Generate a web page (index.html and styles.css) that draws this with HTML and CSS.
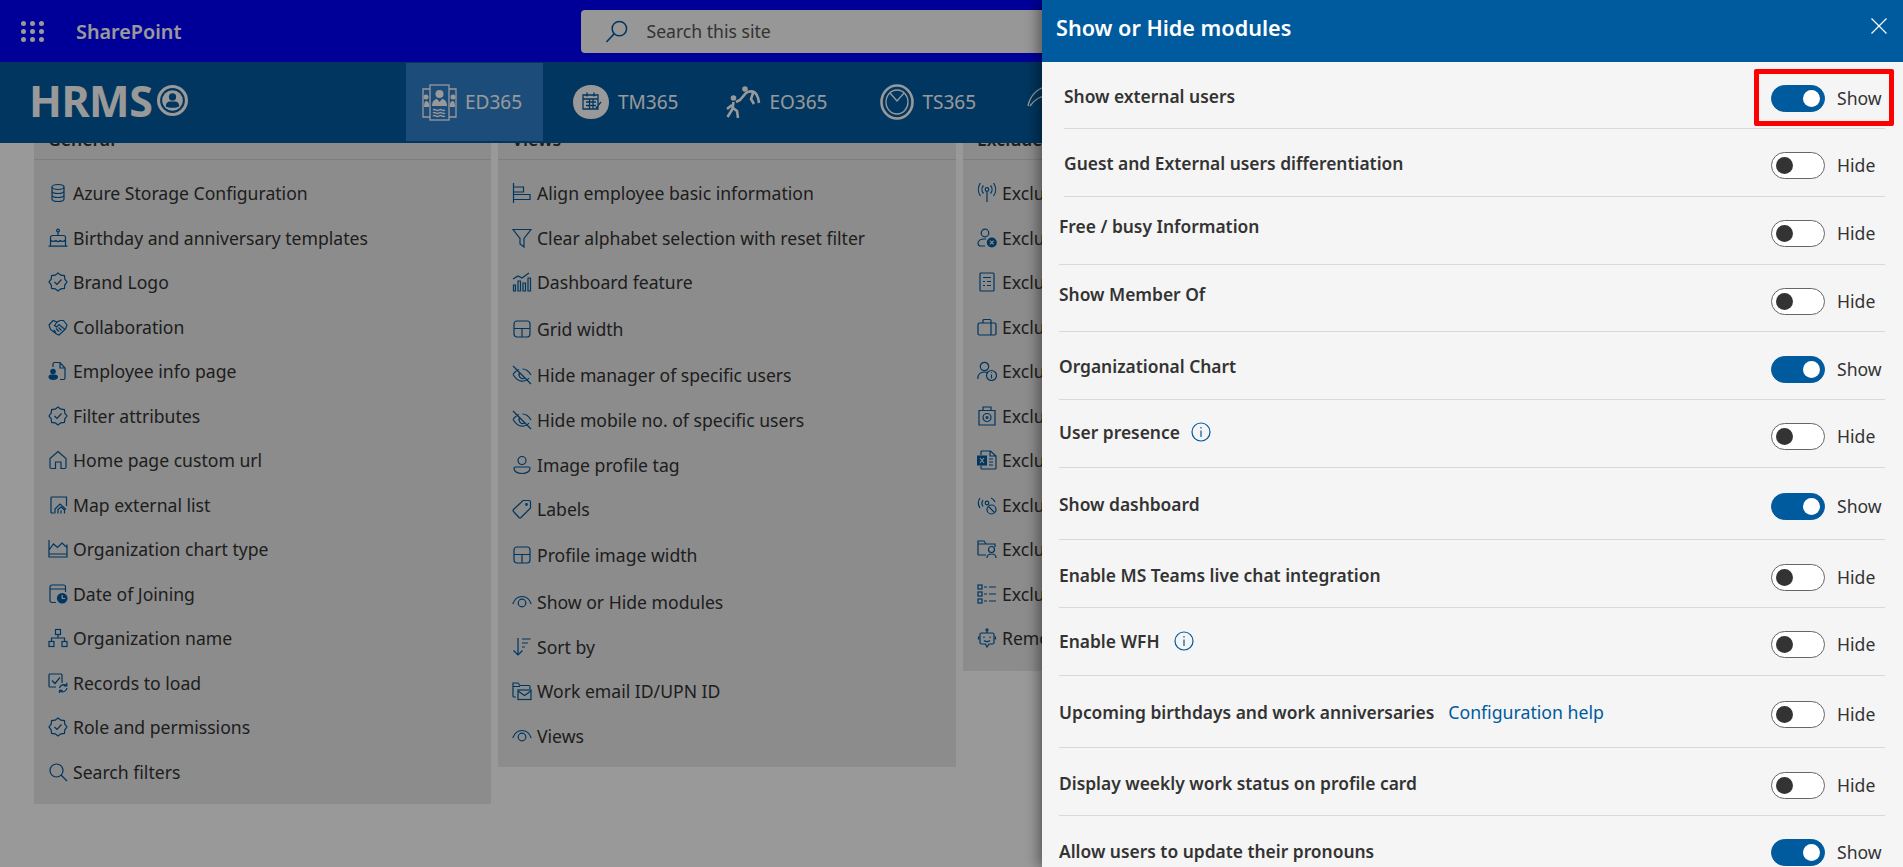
FILE: index.html
```html
<!DOCTYPE html>
<html>
  <head>
    <title>Show or Hide modules</title>
    <link rel="stylesheet" href="styles.css">
  </head>
  <body>
    <svg class="sprite" xmlns="http://www.w3.org/2000/svg">
      <symbol id="i-db" viewBox="0 0 20 20"><ellipse cx="10" cy="4" rx="6" ry="2.5"/><path d="M4 4v12c0 1.4 2.7 2.5 6 2.5s6-1.1 6-2.5V4M4 8c0 1.4 2.7 2.5 6 2.5s6-1.1 6-2.5M4 12c0 1.4 2.7 2.5 6 2.5s6-1.1 6-2.5"/></symbol>
      <symbol id="i-cake" viewBox="0 0 20 20"><circle cx="10" cy="2.5" r="1.4"/><path d="M10 4v3M2.500 18V9.500a2 2 0 0 1 2-2h11a2 2 0 0 1 2 2V18M.5 18.200h19M2.500 12c2 2 3.500 2 5.500 .5 1.300 1.500 2.700 1.500 4 0 2 1.500 3.500 1.500 5.500-.5"/></symbol>
      <symbol id="i-badge" viewBox="0 0 20 20"><polygon points="19,10 16.84,12.83 16.4,16.4 12.83,16.84 10,19 7.17,16.84 3.6,16.4 3.16,12.83 1,10 3.16,7.17 3.6,3.6 7.17,3.16 10,1 12.83,3.16 16.4,3.6 16.84,7.17"/><path d="M6.500 10l2.500 2.500 4.500-5"/></symbol>
      <symbol id="i-shake" viewBox="0 0 20 20"><path d="M1 8l4-4.500 4 1.500 3-1.500h3.500L19 8l-1.500 4-6.500 6-2.500-1L2.500 12.500z"/><path d="M9 5L6.500 8.500 8.500 10 11 7.500l6 5M5.500 13l2.500 2.500M8 11.500l3 3M10.500 10.500l3 3"/></symbol>
      <symbol id="i-docperson" viewBox="0 0 20 20"><path d="M5 6V3a1.500 1.500 0 0 1 1.500-1.500H12L17 7v10a1.500 1.500 0 0 1-1.500 1.500H12M12 1.500V7h5"/><circle class="fill" cx="5" cy="10.500" r="2.800"/><path class="fill" d="M.5 16c0-1.500 1-2.500 2.500-2.500h4c1.500 0 3 1 3 2.500 0 2-2 3-4.800 3S.5 18 .5 16z"/></symbol>
      <symbol id="i-home" viewBox="0 0 20 20"><path d="M10 1.500l8 7V17a1.500 1.500 0 0 1-1.500 1.500H13V12H7.500v6.500h-4A1.500 1.500 0 0 1 2 17V8.500z"/></symbol>
      <symbol id="i-mapext" viewBox="0 0 20 20"><path d="M3 18V3a1 1 0 0 1 1-1h14.500v9M6 18H3"/><path d="M7 18.500v-4.500l5-5 6 5.500M10 18.500v-4l3-2.500 3.500 3v3.500M13 18.500v-3"/></symbol>
      <symbol id="i-chart" viewBox="0 0 20 20"><path d="M1 1v17h18V5.500M1 11l4.500-6 4 3.500L14 4l5 4.500M1 15h18"/></symbol>
      <symbol id="i-calclock" viewBox="0 0 20 20"><path d="M8 18.500H4a2 2 0 0 1-2-2V3a2 2 0 0 1 2-2h11.500a2 2 0 0 1 2 2v5M2 5h15.500"/><circle class="fill" cx="14.200" cy="14.200" r="5.300"/><path class="cut" d="M14.200 11v3.500h3"/></symbol>
      <symbol id="i-org" viewBox="0 0 20 20"><rect x="7.500" y="1.500" width="5" height="5"/><rect x="1" y="13.500" width="5" height="5"/><rect x="14" y="13.500" width="5" height="5"/><path d="M10 6.500V10M3.500 13.500V10h13v3.500"/></symbol>
      <symbol id="i-sync" viewBox="0 0 20 20"><path d="M8 14H2a1 1 0 0 1-1-1V2a1 1 0 0 1 1-1h11a1 1 0 0 1 1 1v8M4 7.500l3 3 5-6"/><path d="M11.500 15a4.500 4.500 0 0 1 7-2.500M19 15a4.500 4.500 0 0 1-7 3M18.800 9.800v3h-3M11.500 20v-2.600h3"/></symbol>
      <symbol id="i-search" viewBox="0 0 20 20"><circle cx="8.500" cy="8.500" r="6.500"/><path d="M13 13l6 6"/></symbol>
      <symbol id="i-align" viewBox="0 0 20 20"><path d="M1.500 0v20M1.500 4h10v5h-10M1.500 11.500h16.500v5H1.500"/></symbol>
      <symbol id="i-funnel" viewBox="0 0 20 20"><path d="M1 1.500h18l-7 9v8.500l-4-3v-5.500z"/></symbol>
      <symbol id="i-dash" viewBox="0 0 20 20"><path d="M1 7l5-3 4 2 7-5M1.500 13h2v6h-2zM6 9h2.500v10H6zM11 11h2.500v8H11zM16 6h2.500v13H16z"/></symbol>
      <symbol id="i-layout" viewBox="0 0 20 20"><rect x="2" y="2" width="16" height="16" rx="3"/><path d="M2 9.500h16M10 9.500V18"/></symbol>
      <symbol id="i-eyeoff" viewBox="0 0 20 20"><path d="M1 1l18 18M1 9.500C3 6.500 5 5 7 4.500M10.500 4C14 4 17 6.500 19 10M17 13c-1.500 2-4 3.200-7 3.200C6.500 16.200 3.500 13.500 1 9.500M8 7.500a3.600 3.600 0 0 0 4.500 5.500"/></symbol>
      <symbol id="i-person" viewBox="0 0 20 20"><circle cx="10" cy="5.500" r="4"/><path d="M3.500 12h13A1.500 1.500 0 0 1 18 13.500c0 3-3.500 5-8 5s-8-2-8-5A1.500 1.500 0 0 1 3.500 12z"/></symbol>
      <symbol id="i-tag" viewBox="0 0 20 20"><path d="M11 1.500h6a1.500 1.500 0 0 1 1.500 1.500v6L9 18.500a1.500 1.500 0 0 1-2 0L1.500 12.500a1.500 1.500 0 0 1 0-2z"/><circle cx="14.500" cy="5.500" r=".8"/></symbol>
      <symbol id="i-eye" viewBox="0 0 20 20"><path d="M.8 12C2.500 7 6 4.500 10 4.500S17.500 7 19.200 12"/><circle cx="10" cy="11" r="3.800"/></symbol>
      <symbol id="i-sort" viewBox="0 0 20 20"><path d="M6 1v17M1.500 13.500L6 18l4.500-4.500M10 2h8.500M10 6h6M10 10h3"/></symbol>
      <symbol id="i-foldermail" viewBox="0 0 20 20"><path d="M4 16H2a1 1 0 0 1-1-1V2h5l2 2.500h9a1 1 0 0 1 1 1V8M1 5.500h7"/><rect x="6" y="9" width="13" height="9.500"/><path d="M6 10l6.500 4.500L19 10"/></symbol>
      <symbol id="i-antenna" viewBox="0 0 20 20"><circle cx="10" cy="6.500" r="1.800"/><path d="M10 8.500V19M6.500 2.500a6 6 0 0 0 0 8M13.500 2.500a6 6 0 0 1 0 8M3.500 0a11 11 0 0 0 0 13M16.500 0a11 11 0 0 1 0 13"/></symbol>
      <symbol id="i-personx" viewBox="0 0 20 20"><circle cx="8" cy="5" r="3.800"/><path d="M8 18H3.500A2.500 2.500 0 0 1 1 15.500C1 13 3.500 11 7 11h2"/><circle class="fill" cx="14.800" cy="14.500" r="5"/><path class="cut" d="M13 12.700l3.600 3.600M16.600 12.700L13 16.300"/></symbol>
      <symbol id="i-listdoc" viewBox="0 0 20 20"><rect x="3" y="1" width="14" height="18" rx="1"/><path d="M6 5.500h8M6 9.500h2M10 9.500h4M6 13.500h2M10 13.500h4"/></symbol>
      <symbol id="i-case" viewBox="0 0 20 20"><rect x="1" y="6" width="18" height="12" rx="1.500"/><path d="M6 6V3.500a1 1 0 0 1 1-1h6a1 1 0 0 1 1 1V18"/></symbol>
      <symbol id="i-personinfo" viewBox="0 0 20 20"><circle cx="7.500" cy="5.500" r="4.200"/><path d="M.8 18c0-4 2-7 6.700-7 1 0 1.500 0 2.500 .5"/><circle cx="14.500" cy="14.500" r="5"/><path d="M14.500 13.500v4M14.500 11.300v.8"/></symbol>
      <symbol id="i-safe" viewBox="0 0 20 20"><path d="M2 4.500h16V19H2zM6 4.500V1h8v3.500"/><circle cx="10" cy="11.500" r="4"/><circle cx="10" cy="11.500" r="1"/></symbol>
      <symbol id="i-excel" viewBox="0 0 20 20"><path d="M4 5V2a1 1 0 0 1 1-1h8.500L19 6v12a1 1 0 0 1-1 1H5a1 1 0 0 1-1-1v-2M13 1v5h6M12 9h4M12 12h4M12 15h4"/><rect class="fill" x="0" y="5.500" width="10" height="10"/><path class="cut" d="M3 8l4 5M7 8l-4 5"/></symbol>
      <symbol id="i-noantenna" viewBox="0 0 20 20"><path d="M3 3a9 9 0 0 0 0 10M6 5a6 6 0 0 0 0 6.500M14 3a7 7 0 0 1 4 4"/><circle cx="10" cy="8" r="1.800"/><circle cx="14.500" cy="14.500" r="4.500"/><path d="M11.500 11.500l6 6"/></symbol>
      <symbol id="i-folderperson" viewBox="0 0 20 20"><path d="M9 16H2a1 1 0 0 1-1-1V2h6l2 3h9v3M1 5h8"/><circle cx="14.500" cy="10.500" r="3"/><path d="M10 19c0-2.500 2-4 4.500-4s4.500 1.500 4.500 4"/></symbol>
      <symbol id="i-checklist" viewBox="0 0 20 20"><rect x="1" y="1" width="4" height="4"/><rect x="1" y="8" width="4" height="4"/><rect x="1" y="15" width="4" height="4"/><path d="M7 3h3M12 3h7M7 10h3M12 10h7M7 17h3M12 17h7"/></symbol>
      <symbol id="i-bot" viewBox="0 0 20 20"><circle cx="10" cy="1.800" r="1"/><path d="M10 3v2M4.500 5h11A1.500 1.500 0 0 1 17 6.500v8A1.500 1.500 0 0 1 15.500 16H12l-2 3-1.500-3H4.500A1.500 1.500 0 0 1 3 14.500v-8A1.500 1.500 0 0 1 4.500 5zM1.500 8.500v3M18.500 8.500v3M7 8.500v1.500M13 8.500v1.500M7 12.500c2 1.500 4 1.500 6 0"/></symbol>
    </svg>

    <div class="app">
      <div class="topbar">
        <div class="waffle">
          <i></i><i></i><i></i><i></i><i></i><i></i><i></i><i></i><i></i>
        </div>
        <span class="brand">SharePoint</span>
        <div class="searchbox">
          <svg class="search-ico" viewBox="0 0 24 24"><circle cx="15" cy="9" r="7.500"/><path d="M9.500 14.500L1.500 23"/></svg>
          <span>Search this site</span>
        </div>
      </div>

      <div class="nav">
        <div class="logo">
          <span class="logo-text">HRMS</span>
          <svg class="logo-mark" viewBox="0 0 30 30">
            <circle class="ring" cx="15" cy="15" r="13.500"/>
            <circle class="disc" cx="15" cy="15" r="10"/>
            <circle class="dark" cx="15" cy="11.500" r="3.500"/>
            <path class="dark" d="M8.500 20.500c0-3 2-4.500 4-4.500h5c2 0 4 1.500 4 4.500 0 .7-3 1.500-6.500 1.500s-6.500-.8-6.500-1.500z"/>
          </svg>
        </div>
        <div class="tabs">
          <div class="tab tab-active">
            <svg class="tab-ico" viewBox="0 0 35 37">
              <path d="M8 5H1v28h7M27 5h7v28h-7"/>
              <rect x="8" y="1" width="19" height="35"/>
              <circle class="solid" cx="17.500" cy="10" r="4"/>
              <path class="solid" d="M10 22c0-5 3-7 5-7l2.500 3 2.500-3c2 0 5 2 5 7z"/>
              <path d="M11 26q1.500-1 3 0t3 0 3 0 3 0M11 29q1.500-1 3 0t3 0 3 0 3 0M11 32q1.500-1 3 0t3 0 3 0 3 0"/>
              <circle class="solid" cx="4" cy="13" r="2.500"/><circle class="solid" cx="31" cy="13" r="2.500"/>
              <path class="solid" d="M2 23c0-4 1-6 2-6s3 1 3 3v3zM33 23c0-4-1-6-2-6s-3 1-3 3v3z"/>
            </svg>
            <span>ED365</span>
          </div>
          <div class="tab tab-tm">
            <svg class="tab-ico" viewBox="0 0 38 36">
              <path class="solid" d="M19 1c10 0 18 7 18 17s-7 17-18 17C8 35 1 28 1 18S9 1 19 1z"/>
              <path class="navy" d="M11 11h15v14H11zM11 15h15M15 8.500v4M22 8.500v4M14 18h10M14 21.500h10M17.500 15v10M21 15v10M24 24l5-6"/>
            </svg>
            <span>TM365</span>
          </div>
          <div class="tab tab-eo">
            <svg class="tab-ico" viewBox="0 0 35 33">
              <circle class="solid" cx="19" cy="3" r="2.800"/>
              <circle class="solid" cx="7.500" cy="12" r="2.800"/>
              <path class="thick" d="M33 17c-.5-5-2-10-6-11.500-3-.5-5 0-7 1.500l-6 7-4 2M27 7l-2 6 3 5M7.500 16l-1 7-5 8M7 22l4 3 1 7M6 19l-5 4"/>
            </svg>
            <span>EO365</span>
          </div>
          <div class="tab tab-ts">
            <svg class="tab-ico" viewBox="0 0 34 36">
              <ellipse class="thick" cx="17" cy="18" rx="15.500" ry="16.500"/>
              <ellipse cx="17" cy="18" rx="11" ry="12"/>
              <path d="M10 9l7 8 7-8"/>
            </svg>
            <span>TS365</span>
          </div>
          <div class="tab tab-last">
            <svg class="tab-ico" viewBox="0 0 35 36">
              <path d="M1 22C3 12 10 4 22 2M3 22C8 15 13 12 24 11"/>
            </svg>
          </div>
        </div>
      </div>

      <div class="content">
        <div class="card">
          <div class="card-head"><h3>General</h3></div>
          <ul class="list">
            <li class="item"><svg class="ico"><use href="#i-db"/></svg>Azure Storage Configuration</li>
            <li class="item"><svg class="ico"><use href="#i-cake"/></svg>Birthday and anniversary templates</li>
            <li class="item"><svg class="ico"><use href="#i-badge"/></svg>Brand Logo</li>
            <li class="item"><svg class="ico"><use href="#i-shake"/></svg>Collaboration</li>
            <li class="item"><svg class="ico"><use href="#i-docperson"/></svg>Employee info page</li>
            <li class="item"><svg class="ico"><use href="#i-badge"/></svg>Filter attributes</li>
            <li class="item"><svg class="ico"><use href="#i-home"/></svg>Home page custom url</li>
            <li class="item"><svg class="ico"><use href="#i-mapext"/></svg>Map external list</li>
            <li class="item"><svg class="ico"><use href="#i-chart"/></svg>Organization chart type</li>
            <li class="item"><svg class="ico"><use href="#i-calclock"/></svg>Date of Joining</li>
            <li class="item"><svg class="ico"><use href="#i-org"/></svg>Organization name</li>
            <li class="item"><svg class="ico"><use href="#i-sync"/></svg>Records to load</li>
            <li class="item"><svg class="ico"><use href="#i-badge"/></svg>Role and permissions</li>
            <li class="item"><svg class="ico"><use href="#i-search"/></svg>Search filters</li>
          </ul>
        </div>

        <div class="card">
          <div class="card-head"><h3>Views</h3></div>
          <ul class="list list-views">
            <li class="item"><svg class="ico"><use href="#i-align"/></svg>Align employee basic information</li>
            <li class="item"><svg class="ico"><use href="#i-funnel"/></svg>Clear alphabet selection with reset filter</li>
            <li class="item"><svg class="ico"><use href="#i-dash"/></svg>Dashboard feature</li>
            <li class="item item-48"><svg class="ico"><use href="#i-layout"/></svg>Grid width</li>
            <li class="item item-45"><svg class="ico"><use href="#i-eyeoff"/></svg>Hide manager of specific users</li>
            <li class="item item-45"><svg class="ico"><use href="#i-eyeoff"/></svg>Hide mobile no. of specific users</li>
            <li class="item item-44"><svg class="ico"><use href="#i-person"/></svg>Image profile tag</li>
            <li class="item item-45"><svg class="ico"><use href="#i-tag"/></svg>Labels</li>
            <li class="item item-47"><svg class="ico"><use href="#i-layout"/></svg>Profile image width</li>
            <li class="item item-46"><svg class="ico"><use href="#i-eye"/></svg>Show or Hide modules</li>
            <li class="item item-44"><svg class="ico"><use href="#i-sort"/></svg>Sort by</li>
            <li class="item item-45"><svg class="ico"><use href="#i-foldermail"/></svg>Work email ID/UPN ID</li>
            <li class="item item-45"><svg class="ico"><use href="#i-eye"/></svg>Views</li>
          </ul>
        </div>

        <div class="card">
          <div class="card-head"><h3>Exclude</h3></div>
          <ul class="list">
            <li class="item"><svg class="ico"><use href="#i-antenna"/></svg>Exclude</li>
            <li class="item"><svg class="ico"><use href="#i-personx"/></svg>Exclude</li>
            <li class="item"><svg class="ico"><use href="#i-listdoc"/></svg>Exclude</li>
            <li class="item"><svg class="ico"><use href="#i-case"/></svg>Exclude</li>
            <li class="item"><svg class="ico"><use href="#i-personinfo"/></svg>Exclude</li>
            <li class="item"><svg class="ico"><use href="#i-safe"/></svg>Exclude</li>
            <li class="item"><svg class="ico"><use href="#i-excel"/></svg>Exclude</li>
            <li class="item"><svg class="ico"><use href="#i-noantenna"/></svg>Exclude</li>
            <li class="item"><svg class="ico"><use href="#i-folderperson"/></svg>Exclude</li>
            <li class="item"><svg class="ico"><use href="#i-checklist"/></svg>Exclude</li>
            <li class="item"><svg class="ico"><use href="#i-bot"/></svg>Remove</li>
          </ul>
        </div>
      </div>
    </div>

    <div class="dim"></div>

    <div class="panel">
      <div class="panel-head">
        <span class="panel-title">Show or Hide modules</span>
        <svg class="close" viewBox="0 0 16 16"><path d="M.5 .5l15 15M15.500 .5l-15 15"/></svg>
      </div>
      <div class="focus-box"></div>

      <div class="row row-inset row-67">
        <span class="label up-1">Show external users</span>
        <div class="switch"><span class="toggle on"><i></i></span><span class="state">Show</span></div>
      </div>
      <div class="row row-inset">
        <span class="label up-1">Guest and External users differentiation</span>
        <div class="switch"><span class="toggle"><i></i></span><span class="state">Hide</span></div>
      </div>
      <div class="row">
        <span class="label up-6">Free / busy Information</span>
        <div class="switch"><span class="toggle"><i></i></span><span class="state">Hide</span></div>
      </div>
      <div class="row row-67">
        <span class="label up-6">Show Member Of</span>
        <div class="switch"><span class="toggle"><i></i></span><span class="state">Hide</span></div>
      </div>
      <div class="row low-1">
        <span class="label up-2">Organizational Chart</span>
        <div class="switch"><span class="toggle on"><i></i></span><span class="state">Show</span></div>
      </div>
      <div class="row">
        <span class="label up-3">User presence<svg class="info" viewBox="0 0 20 20"><circle cx="10" cy="10" r="9"/><path d="M10 8.500V15M10 5v1.500"/></svg></span>
        <div class="switch"><span class="toggle"><i></i></span><span class="state">Hide</span></div>
      </div>
      <div class="row row-72 low-2">
        <span class="label up-1">Show dashboard</span>
        <div class="switch"><span class="toggle on"><i></i></span><span class="state">Show</span></div>
      </div>
      <div class="row low-1">
        <span class="label up-1">Enable MS Teams live chat integration</span>
        <div class="switch"><span class="toggle"><i></i></span><span class="state">Hide</span></div>
      </div>
      <div class="row">
        <span class="label up-2">Enable WFH<svg class="info info-wfh" viewBox="0 0 20 20"><circle cx="10" cy="10" r="9"/><path d="M10 8.500V15M10 5v1.500"/></svg></span>
        <div class="switch"><span class="toggle"><i></i></span><span class="state">Hide</span></div>
      </div>
      <div class="row row-72 low-2">
        <span class="label up-1">Upcoming birthdays and work anniversaries<a class="help" href="#">Configuration help</a></span>
        <div class="switch"><span class="toggle"><i></i></span><span class="state">Hide</span></div>
      </div>
      <div class="row low-1">
        <span class="label up-1">Display weekly work status on profile card</span>
        <div class="switch"><span class="toggle"><i></i></span><span class="state">Hide</span></div>
      </div>
      <div class="row">
        <span class="label">Allow users to update their pronouns</span>
        <div class="switch"><span class="toggle on"><i></i></span><span class="state">Show</span></div>
      </div>
    </div>
  </body>
</html>
```

FILE: styles.css
```css
html,
body {
  height: 100%;
  margin: 0;
  padding: 0;
  overflow: hidden;
  background: #fff;
  font-family: "Noto Sans", sans-serif;
  color: #333;
}

.sprite {
  display: none;
}

.app {
  height: 867px;
  overflow: hidden;
}

/* top bar */
.topbar {
  display: flex;
  align-items: center;
  height: 62px;
  background: #0000ff;
}
.waffle {
  display: grid;
  grid-template-columns: repeat(3, 5px);
  gap: 3px 4px;
  margin-left: 21px;
}
.waffle i {
  width: 5px;
  height: 5px;
  border-radius: 50%;
  background: #fff;
}
.brand {
  margin-left: 32px;
  color: #fff;
  font-size: 19.8px;
  font-weight: 600;
}
.searchbox {
  display: flex;
  align-items: center;
  margin-left: 400px;
  width: 560px;
  height: 43px;
  border-radius: 4px;
  background: #fcfcfc;
  color: #555;
  font-size: 17.6px;
}
.search-ico {
  width: 23px;
  height: 23px;
  margin: 0 18px 0 24px;
  fill: none;
  stroke: #005a9e;
  stroke-width: 1.6;
}

/* module nav */
.nav {
  display: flex;
  height: 81px;
  background: #005a9e;
}
.logo {
  display: flex;
  align-items: center;
  width: 406px;
  padding: 0 0 4px 29px;
  box-sizing: border-box;
  color: #fff;
}
.logo-text {
  font-size: 43px;
  font-weight: 700;
  line-height: 1;
  letter-spacing: -0.5px;
}
.logo-mark {
  width: 31px;
  height: 31px;
  margin-left: 5px;
}
.logo-mark .ring {
  fill: none;
  stroke: #fff;
  stroke-width: 3;
}
.logo-mark .disc {
  fill: #fff;
}
.logo-mark .dark {
  fill: #005a9e;
}
.tabs {
  display: flex;
  gap: 14px;
  white-space: nowrap;
}
.tab {
  display: flex;
  align-items: center;
  gap: 8px;
  height: 78px;
  margin-top: 1px;
  padding: 0 21px 0 16px;
  color: #fff;
  font-size: 19px;
}
.tab-active {
  background: #2f80cc;
}
.tab-ico {
  fill: none;
  stroke: #fff;
  stroke-width: 1.3;
  flex: none;
}
.tab-ico .solid {
  fill: #fff;
  stroke: none;
}
.tab-ico .navy {
  stroke: #005a9e;
}
.tab-ico .thick {
  stroke-width: 2.6;
}
.tab-active .tab-ico {
  width: 35px;
  height: 37px;
}
.tab-tm {
  margin-left: -1px;
}
.tab-tm .tab-ico {
  width: 38px;
  height: 36px;
}
.tab-eo {
  margin-left: -3px;
}
.tab-eo .tab-ico {
  width: 35px;
  height: 33px;
}
.tab-ts {
  margin-left: 2px;
}
.tab-ts .tab-ico {
  width: 34px;
  height: 36px;
}
.tab-last .tab-ico {
  width: 35px;
  height: 36px;
}

/* settings columns */
.content {
  display: grid;
  grid-template-columns: 457px 458px 458px;
  gap: 7px;
  align-items: start;
  margin-left: 34px;
}
.card {
  background: #e9e9e9;
}
.card-head {
  display: flex;
  align-items: flex-end;
  height: 16px;
  padding-left: 14px;
  border-bottom: 1px solid #d3d3d3;
  overflow: hidden;
}
.card-head h3 {
  margin: 0 0 8px;
  flex: none;
  font-size: 17.6px;
  font-weight: 600;
  line-height: 24px;
}
.list {
  margin: 0;
  padding: 11px 0 10px;
  list-style: none;
}
.list-views {
  padding-bottom: 8px;
}
.item {
  display: flex;
  align-items: center;
  gap: 5px;
  height: 44.5px;
  padding-left: 14px;
  font-size: 17.6px;
  white-space: nowrap;
}
.item-44 {
  height: 44px;
}
.item-45 {
  height: 45px;
}
.item-46 {
  height: 46px;
}
.item-47 {
  height: 47px;
}
.item-48 {
  height: 48px;
}
.ico {
  width: 20px;
  height: 20px;
  flex: none;
  color: #005a9e;
  fill: none;
  stroke: #005a9e;
  stroke-width: 1.2;
}
symbol .fill {
  fill: #005a9e;
  stroke: none;
}
symbol .cut {
  stroke: #e9e9e9;
}

/* overlay behind the panel */
.dim {
  position: absolute;
  top: 0;
  left: 0;
  right: 0;
  bottom: 0;
  background: rgba(0, 0, 0, 0.4);
}

/* side panel */
.panel {
  position: absolute;
  top: 0;
  right: 0;
  bottom: 0;
  width: 861px;
  overflow: hidden;
  background: #f5f5f5;
  box-shadow: -4px 0 12px rgba(0, 0, 0, 0.4);
}
.panel-head {
  display: flex;
  align-items: flex-start;
  justify-content: space-between;
  height: 62px;
  padding: 0 16px 0 14px;
  background: #005a9e;
  color: #fff;
}
.panel-title {
  margin-top: 14px;
  font-size: 21.6px;
  font-weight: 600;
  line-height: 28px;
}
.close {
  width: 16px;
  height: 16px;
  margin-top: 18px;
  fill: none;
  stroke: #fff;
  stroke-width: 1.2;
}
.focus-box {
  position: absolute;
  top: 69px;
  left: 712px;
  width: 130px;
  height: 47px;
  border: 5px solid #f00;
  border-radius: 2px;
}
.row {
  display: flex;
  justify-content: space-between;
  box-sizing: border-box;
  height: 68px;
  margin: 0 18px 0 17px;
  padding-top: 23px;
  border-bottom: 1px solid #d9d9d9;
}
.row-inset {
  margin-left: 22px;
}
.row-67 {
  height: 67px;
}
.row-72 {
  height: 72px;
}
.low-1 {
  padding-top: 24px;
}
.low-2 {
  padding-top: 25px;
}
.label {
  display: flex;
  align-items: center;
  height: 24px;
  font-size: 17.4px;
  font-weight: 600;
  white-space: nowrap;
}
.up-1 {
  margin-top: -1px;
}
.up-2 {
  margin-top: -2px;
}
.up-3 {
  margin-top: -3px;
}
.up-6 {
  margin-top: -6px;
}
.help {
  margin-left: 14px;
  color: #005a9e;
  font-size: 17.7px;
  font-weight: 400;
  text-decoration: none;
}
.info {
  width: 20px;
  height: 20px;
  margin-left: 11px;
  fill: none;
  stroke: #005a9e;
  stroke-width: 1.2;
}
.info-wfh {
  margin-left: 14px;
}
.switch {
  display: flex;
  align-items: center;
  gap: 12px;
  width: 114px;
  height: 27px;
  font-size: 17.6px;
}
.state {
  margin-top: -2px;
}
.toggle {
  display: flex;
  align-items: center;
  box-sizing: border-box;
  width: 54px;
  height: 27px;
  padding: 0 4px;
  border: 1px solid #666;
  border-radius: 14px;
  background: #fff;
}
.toggle i {
  width: 17px;
  height: 17px;
  border-radius: 50%;
  background: #333;
}
.toggle.on {
  justify-content: flex-end;
  border-color: #005a9e;
  background: #005a9e;
}
.toggle.on i {
  background: #fff;
}
```
